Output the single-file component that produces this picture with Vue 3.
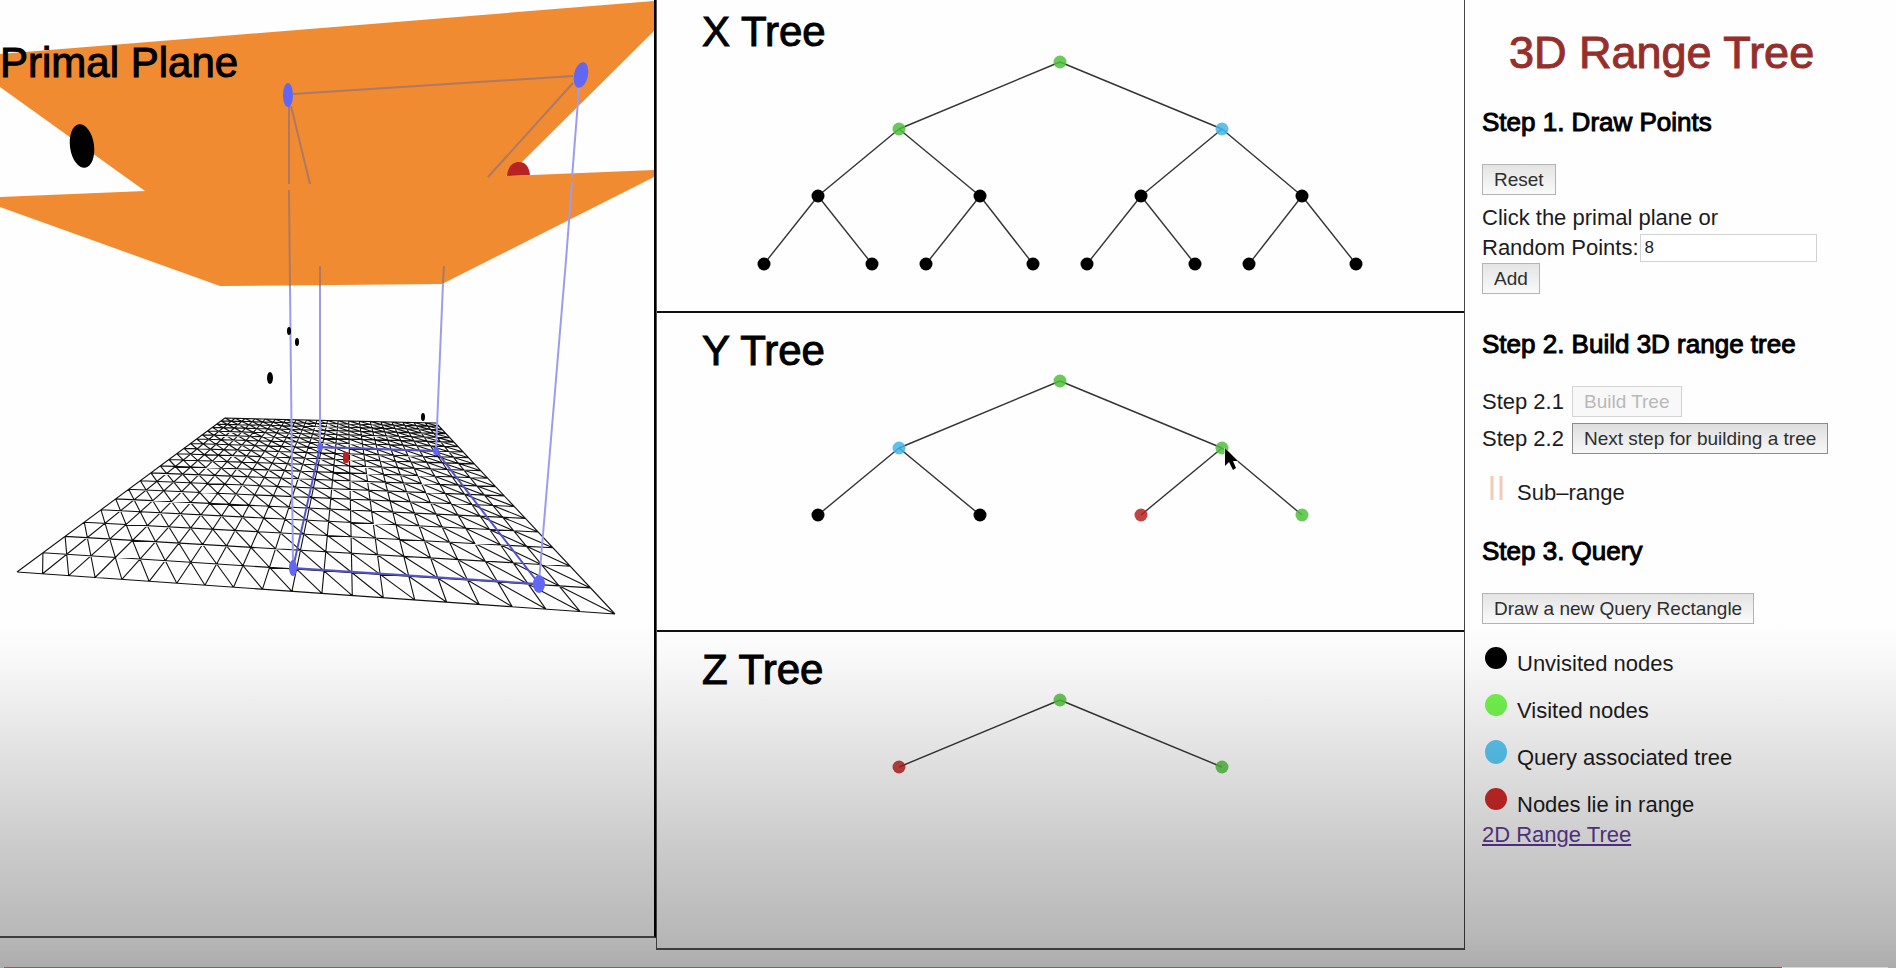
<script setup>
import { ref } from 'vue'

const points = ref(8)

const CELLS = 20

// Maps the unit square onto the floor quad: (0,0) is near-left, (1,1) is far-right.
const floor = { a: [17, 572], b: [615, 614], c: [436, 423], d: [225, 418] }
function makeProjection({ a, b, c, d }) {
  const dx1 = b[0] - c[0]
  const dx2 = d[0] - c[0]
  const sx = a[0] - b[0] + c[0] - d[0]
  const dy1 = b[1] - c[1]
  const dy2 = d[1] - c[1]
  const sy = a[1] - b[1] + c[1] - d[1]
  const det = dx1 * dy2 - dx2 * dy1
  const g = (sx * dy2 - dx2 * sy) / det
  const h = (dx1 * sy - sx * dy1) / det
  return (u, v) => {
    const w = g * u + h * v + 1
    const x = ((b[0] - a[0] + g * b[0]) * u + (d[0] - a[0] + h * d[0]) * v + a[0]) / w
    const y = ((b[1] - a[1] + g * b[1]) * u + (d[1] - a[1] + h * d[1]) * v + a[1]) / w
    return `${x.toFixed(1)} ${y.toFixed(1)}`
  }
}
const project = makeProjection(floor)
const segment = (u1, v1, u2, v2) =>
  `M${project(u1 / CELLS, v1 / CELLS)}L${project(u2 / CELLS, v2 / CELLS)}`

const mesh = []
for (let i = 0; i <= CELLS; i++) {
  mesh.push(segment(i, 0, i, CELLS), segment(0, i, CELLS, i))
}
for (let k = 1; k < 2 * CELLS; k++) {
  const start = Math.max(0, k - CELLS)
  const end = Math.min(k, CELLS)
  mesh.push(segment(start, k - start, end, k - end))
}
const meshPath = mesh.join('')

// Each tree lists node states level by level.
const levelX = [
  [403],
  [242, 565],
  [161, 323, 484, 645],
  [107, 215, 269, 376, 430, 538, 592, 699],
]
const levelY = [68, 135, 202, 270]

function buildTree(name, view, levels) {
  const nodes = []
  const edges = []
  levels.forEach((states, level) => {
    states.forEach((state, i) => {
      nodes.push({ state, x: levelX[level][i], y: levelY[level] })
      if (level > 0) {
        edges.push({
          x1: levelX[level - 1][i >> 1],
          y1: levelY[level - 1],
          x2: levelX[level][i],
          y2: levelY[level],
        })
      }
    })
  })
  return { name, view, nodes, edges }
}

const trees = [
  buildTree('X Tree', '0 6 807 311', [
    ['visited'],
    ['visited', 'query'],
    Array(4).fill('unvisited'),
    Array(8).fill('unvisited'),
  ]),
  buildTree('Y Tree', '0 0 807 317', [
    ['visited'],
    ['query', 'visited'],
    ['unvisited', 'unvisited', 'hit', 'visited'],
  ]),
  buildTree('Z Tree', '0 0 807 316', [['visited'], ['hit', 'visited']]),
]

const legend = [
  { label: 'Unvisited nodes', state: 'unvisited', rx: 11, ry: 11 },
  { label: 'Visited nodes', state: 'visited', rx: 11, ry: 11 },
  { label: 'Query associated tree', state: 'query', rx: 11, ry: 12 },
  { label: 'Nodes lie in range', state: 'hit', rx: 11, ry: 11 },
]
</script>

<template>
  <div class="page">
    <div class="layout">
      <section class="scene">
        <svg class="canvas" viewBox="0 0 654 936" role="img" aria-label="Primal plane">
          <polygon class="plane" points="0,54 654,1 654,31 520,164 506,176 654,170 654,177 442,284 220,286 0,207 0,197 145,191 0,87" />
          <path class="mesh" :d="meshPath" />
          <text class="label" x="0" y="77">Primal Plane</text>

          <ellipse cx="82" cy="146" rx="12" ry="22" transform="rotate(-8 82 146)" />
          <path class="hit" d="M507 176C508 166 513 162 519 162S529 166 530 175Z" />

          <g class="ray on-plane">
            <path d="M293 94L573 76M289 106V184M291 106L310 184M573 83L488 177M289 190L290 286M320 266V286M444 266L443 283" />
          </g>
          <g class="ray">
            <path d="M579 88L572 178M572 182L566 260L539 582M290 286L293 566M320 286V447M443 283L436 450" />
          </g>
          <g class="ray floor-ray">
            <path d="M293 568L320 447L436 451L539 584Z" />
          </g>

          <ellipse cx="289" cy="331" rx="2" ry="4" />
          <ellipse cx="297" cy="342" rx="2" ry="4" />
          <ellipse cx="270" cy="378" rx="3" ry="6" />
          <ellipse cx="423" cy="417" rx="2" ry="4" />
          <rect class="hit" x="343" y="452" width="6" height="11" rx="2" />

          <g class="handle">
            <ellipse cx="288" cy="95" rx="5" ry="12" />
            <ellipse cx="581" cy="75" rx="7" ry="13" transform="rotate(12 581 75)" />
            <ellipse cx="293" cy="568" rx="4" ry="8" />
            <ellipse cx="539" cy="584" rx="6" ry="9" />
            <ellipse cx="320" cy="447" rx="3" ry="4" />
            <ellipse cx="436" cy="451" rx="3" ry="4" />
          </g>
        </svg>
      </section>

      <div class="trees">
        <section v-for="tree in trees" :key="tree.name" class="tree">
          <svg class="canvas" :viewBox="tree.view" role="img" :aria-label="tree.name">
            <text class="label" x="45" y="52">{{ tree.name }}</text>
            <line
              v-for="edge in tree.edges"
              :key="`${edge.x2}-${edge.y2}`"
              class="edge"
              :x1="edge.x1"
              :y1="edge.y1"
              :x2="edge.x2"
              :y2="edge.y2"
            />
            <circle
              v-for="node in tree.nodes"
              :key="`${node.x}-${node.y}`"
              :class="['node', node.state]"
              :cx="node.x"
              :cy="node.y"
              r="6.5"
            />
            <path
              v-if="tree.name === 'Y Tree'"
              class="pointer"
              d="M568 135V153L572 149L576 157L579 155L576 148H581Z"
            />
          </svg>
        </section>
      </div>

      <aside class="controls">
        <h1>3D Range Tree</h1>

        <h2>Step 1. Draw Points</h2>
        <div class="group">
          <div class="row"><button type="button">Reset</button></div>
          <div class="hint">
            <p>Click the primal plane or</p>
            <div class="row field">
              <label for="points">Random Points:</label>
              <input id="points" v-model="points" type="text" />
            </div>
          </div>
          <div class="row"><button type="button">Add</button></div>
        </div>

        <h2>Step 2. Build 3D range tree</h2>
        <div class="group">
          <div class="row step"><span>Step 2.1</span><button type="button" disabled>Build Tree</button></div>
          <div class="row step"><span>Step 2.2</span><button type="button" class="active">Next step for building a tree</button></div>
          <div class="key sub-range">
            <svg width="29" height="30" viewBox="0 0 29 30" aria-hidden="true">
              <path class="bars" d="M10 -2V22M19 -2V22" />
            </svg>
            <span>Sub–range</span>
          </div>
        </div>

        <h2>Step 3. Query</h2>
        <div class="row"><button type="button">Draw a new Query Rectangle</button></div>

        <ul class="legend">
          <li v-for="item in legend" :key="item.state" class="key">
            <svg width="29" height="30" viewBox="0 0 29 30" aria-hidden="true">
              <ellipse :class="['dot', item.state]" cx="14" cy="9" :rx="item.rx" :ry="item.ry" />
            </svg>
            <span>{{ item.label }}</span>
          </li>
        </ul>
        <a href="#2d">2D Range Tree</a>
      </aside>
    </div>

    <div class="shade"></div>
    <div class="progress"><span class="played"></span><span class="rest"></span></div>
  </div>
</template>

<style>
body {
  margin: 0;
  background: #fff;
}
</style>

<style scoped>
.page {
  position: relative;
  min-height: 100vh;
  overflow: hidden;
  background: #fefefe;
  color: #1c1c1c;
  font-family: "Liberation Sans", Arial, sans-serif;
  font-size: 22px;
  line-height: 30px;
}
.layout {
  display: grid;
  grid-template-columns: 656fr 809fr 431fr;
  align-items: start;
}
.canvas {
  display: block;
  width: 100%;
  height: auto;
}
.scene {
  border-right: 2px solid #000;
  border-bottom: 2px solid #555;
}
.trees {
  border-left: 1px solid #555;
  border-right: 1px solid #444;
}
.tree {
  border-bottom: 2px solid #111;
}
.tree:last-child {
  border-bottom-color: #555;
}
.label {
  font-size: 42px;
  fill: #000;
  stroke: #000;
  stroke-width: 1;
}
.plane { fill: #f08b32; }
.mesh {
  fill: none;
  stroke: #111;
  stroke-width: 1.1;
}
.ray {
  fill: none;
  stroke: #9c9cec;
  stroke-width: 2;
}
.on-plane { stroke: #ae7862; }
.floor-ray { stroke: #5454c8; }
.handle { fill: #6166f4; }
.hit { fill: #b82222; }
.unvisited { fill: #000; }
.node.visited,
.node.query,
.node.hit { fill-opacity: 0.85; }
.visited { fill: #4fc03c; }
.query { fill: #43b6e8; }
.edge {
  stroke: #333;
  stroke-width: 1.4;
}
.pointer {
  fill: #000;
  stroke: #fff;
  stroke-width: 1;
  paint-order: stroke;
}
.controls {
  padding: 28px 0 0 17px;
  white-space: nowrap;
}
h1 {
  margin: 0 0 29px 27px;
  color: #962f2b;
  font-size: 45px;
  font-weight: 400;
  line-height: 50px;
  -webkit-text-stroke: 1px;
}
h2 {
  margin: 0 0 27px;
  color: #000;
  font-size: 26px;
  font-weight: 400;
  line-height: 30px;
  -webkit-text-stroke: 1px;
}
p { margin: 0; }
.group { margin-bottom: 35px; }
.row {
  display: flex;
  align-items: center;
}
.hint { padding-top: 8px; }
.step {
  gap: 8px;
  margin-bottom: 6px;
}
button {
  padding: 0 11px;
  border: 1px solid #b4b4b4;
  border-radius: 0;
  background: linear-gradient(#e4e4e4, #fafafa);
  color: #2e2e2e;
  font-family: inherit;
  font-size: 19px;
  line-height: 29px;
}
button.active {
  border-color: #8c8c8c;
  background: linear-gradient(#dedede, #f8f8f8);
}
button:disabled {
  border-color: #d4d4d4;
  background: #f8f8f8;
  color: #b8b8b8;
}
input {
  box-sizing: border-box;
  width: 177px;
  height: 28px;
  padding: 0 4px;
  border: 1px solid #d2d2d2;
  background: #fff;
  color: #222;
  font-family: inherit;
  font-size: 17px;
}
.field {
  gap: 1px;
  height: 30px;
}
.key {
  display: flex;
  gap: 6px;
}
.key svg { overflow: visible; }
.sub-range {
  margin: 24px 0 -7px;
}
.bars {
  fill: none;
  stroke: #f0cbb8;
  stroke-width: 3;
}
.dot.visited { fill: #74f84e; }
.dot.query { fill: #5ccaf6; }
.dot.hit { fill: #d02a28; }
.legend {
  display: grid;
  gap: 17px;
  margin: 25px 0 0;
  padding: 0;
  list-style: none;
}
a { color: #5f3a96; }
.shade {
  position: absolute;
  inset: auto 0 0;
  height: 348px;
  background: linear-gradient(
    rgba(0, 0, 0, 0),
    rgba(0, 0, 0, 0.02) 10%,
    rgba(0, 0, 0, 0.1) 35%,
    rgba(0, 0, 0, 0.2) 65%,
    rgba(0, 0, 0, 0.28) 91%,
    rgba(0, 0, 0, 0.32)
  );
  pointer-events: none;
}
.progress {
  position: absolute;
  inset: auto 8px 0 4px;
  display: flex;
  height: 1px;
}
.played {
  flex: 1778;
  background: #e33b2e;
}
.rest {
  flex: 106;
  background: #d8d8d8;
}
</style>
